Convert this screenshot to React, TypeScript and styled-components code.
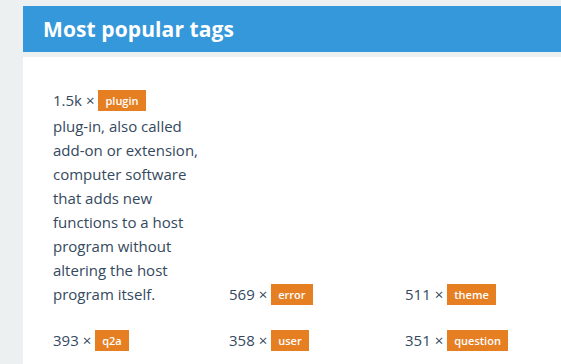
import React from 'react';
import styled, { createGlobalStyle } from 'styled-components';

const GlobalStyle = createGlobalStyle`
  html, body {
    margin: 0;
    padding: 0;
    background: #ecf0f1;
    font-family: "Open Sans", "Liberation Sans", sans-serif;
    color: #34495e;
  }
`;

const Page = styled.div`
  padding: 6px 0 0 23px;
  height: 358px;
  overflow: hidden;
`;

const Header = styled.div`
  background: #3498db;
  height: 46px;
  display: flex;
  align-items: center;
  padding-left: 20px;
`;

const Title = styled.h1`
  margin: 0;
  color: #fff;
  font-size: 21px;
  font-weight: 700;
  letter-spacing: 0.1px;
`;

const Body = styled.div`
  margin-top: 5px;
  background: #fff;
  padding: 31px 0 20px 30px;
  min-height: 300px;
`;

const Grid = styled.div`
  display: grid;
  grid-template-columns: repeat(3, 176px);
  row-gap: 22px;
  align-items: end;
`;

const Cell = styled.div`
  font-size: 15px;
  line-height: 24px;
  padding-right: 14px;
`;

const Head = styled.div`
  height: 24px;
  white-space: nowrap;
`;

const Count = styled.span`
  margin-right: 4px;
`;

const Tag = styled.span`
  display: inline-block;
  background: #e67e22;
  color: #fff;
  font-size: 11px;
  font-weight: 600;
  line-height: 21px;
  padding: 0 7px;
  vertical-align: 1px;
`;

const Desc = styled.div`
  margin-top: 2px;
`;

type Item = { count: string; tag: string; desc?: string };

const items: Item[] = [
  {
    count: '1.5k',
    tag: 'plugin',
    desc: 'plug-in, also called add-on or extension, computer software that adds new functions to a host program without altering the host program itself.',
  },
  { count: '569', tag: 'error' },
  { count: '511', tag: 'theme' },
  { count: '393', tag: 'q2a' },
  { count: '358', tag: 'user' },
  { count: '351', tag: 'question' },
];

export default function App() {
  return (
    <>
      <GlobalStyle />
      <Page>
        <Header>
          <Title>Most popular tags</Title>
        </Header>
        <Body>
          <Grid>
            {items.map((it) => (
              <Cell key={it.tag}>
                <Head>
                  <Count>{it.count} ×</Count>
                  <Tag>{it.tag}</Tag>
                </Head>
                {it.desc && <Desc>{it.desc}</Desc>}
              </Cell>
            ))}
          </Grid>
        </Body>
      </Page>
    </>
  );
}
